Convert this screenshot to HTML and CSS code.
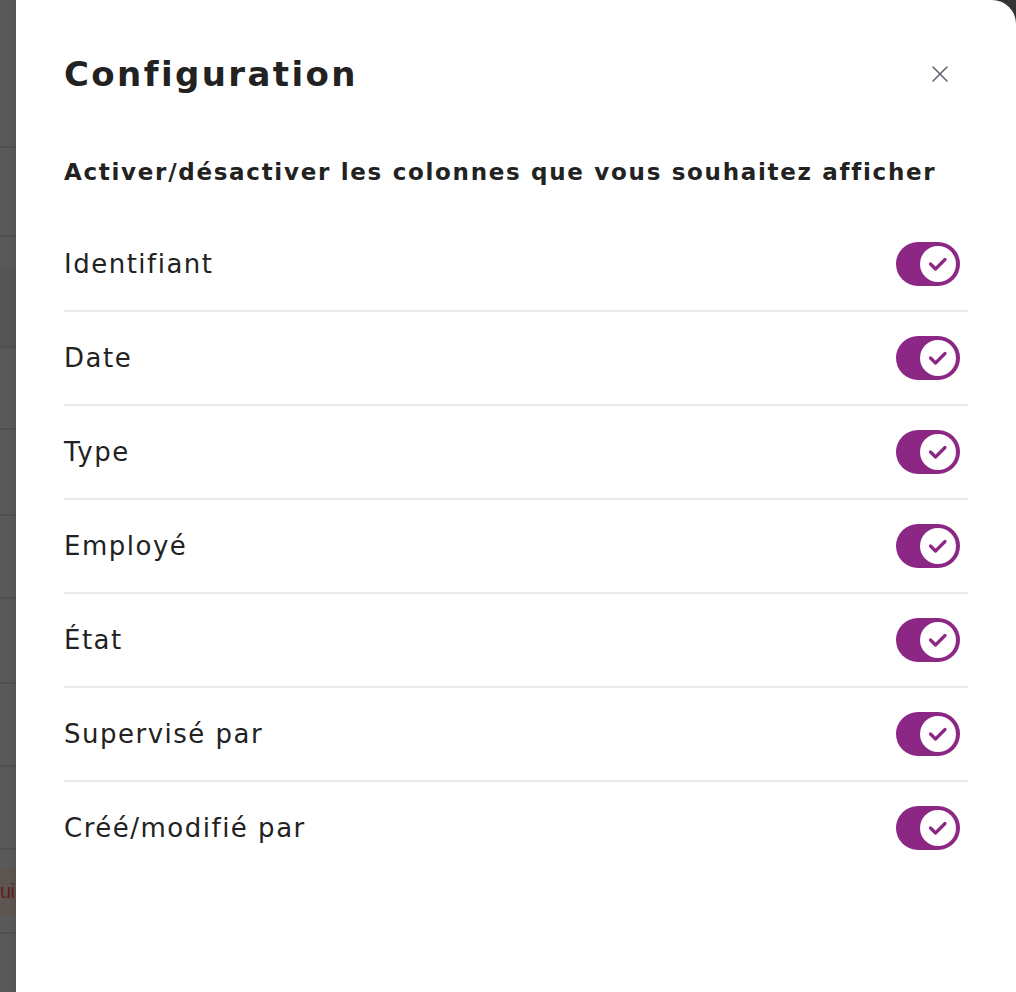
FILE: index.html
```html
<!DOCTYPE html>
<html lang="fr">
<head>
<meta charset="utf-8">
<title>Configuration</title>
<link rel="stylesheet" href="styles.css">
</head>
<body>
<div class="screen">
  <div class="backdrop">
    <div class="bg-row" style="height:148px"></div>
    <div class="bg-row" style="height:89px"></div>
    <div class="bg-row plain" style="height:31px"></div>
    <div class="bg-row band" style="height:80px"></div>
    <div class="bg-row" style="height:82px"></div>
    <div class="bg-row" style="height:86px"></div>
    <div class="bg-row" style="height:83px"></div>
    <div class="bg-row" style="height:85px"></div>
    <div class="bg-row" style="height:83px"></div>
    <div class="bg-row" style="height:83px"></div>
    <div class="bg-row plain" style="height:18px"></div>
    <div class="bg-row band-red plain" style="height:47px"><span class="bg-text">ui</span></div>
    <div class="bg-row" style="height:19px"></div>
  </div>
  <div class="modal">
    <div class="modal-header">
      <h1 class="modal-title">Configuration</h1>
      <button class="close" aria-label="Fermer">
        <svg width="16" height="16" viewBox="0 0 16 16"><path d="M1 1 L15 15 M15 1 L1 15" stroke="#5f5f6e" stroke-width="1.5" stroke-linecap="round" fill="none"/></svg>
      </button>
    </div>
    <h2 class="subtitle">Activer/désactiver les colonnes que vous souhaitez afficher</h2>
    <ul class="list">
      <li class="item"><span class="label">Identifiant</span><span class="toggle"><svg class="knob" width="36" height="36" viewBox="0 0 36 36"><circle cx="18" cy="18" r="18" fill="#fff"/><polyline points="10.5,18 15.5,23 25,13.5" fill="none" stroke="#8c2785" stroke-width="3.2" stroke-linecap="round" stroke-linejoin="round"/></svg></span></li>
      <li class="item"><span class="label">Date</span><span class="toggle"><svg class="knob" width="36" height="36" viewBox="0 0 36 36"><circle cx="18" cy="18" r="18" fill="#fff"/><polyline points="10.5,18 15.5,23 25,13.5" fill="none" stroke="#8c2785" stroke-width="3.2" stroke-linecap="round" stroke-linejoin="round"/></svg></span></li>
      <li class="item"><span class="label">Type</span><span class="toggle"><svg class="knob" width="36" height="36" viewBox="0 0 36 36"><circle cx="18" cy="18" r="18" fill="#fff"/><polyline points="10.5,18 15.5,23 25,13.5" fill="none" stroke="#8c2785" stroke-width="3.2" stroke-linecap="round" stroke-linejoin="round"/></svg></span></li>
      <li class="item"><span class="label">Employé</span><span class="toggle"><svg class="knob" width="36" height="36" viewBox="0 0 36 36"><circle cx="18" cy="18" r="18" fill="#fff"/><polyline points="10.5,18 15.5,23 25,13.5" fill="none" stroke="#8c2785" stroke-width="3.2" stroke-linecap="round" stroke-linejoin="round"/></svg></span></li>
      <li class="item"><span class="label">État</span><span class="toggle"><svg class="knob" width="36" height="36" viewBox="0 0 36 36"><circle cx="18" cy="18" r="18" fill="#fff"/><polyline points="10.5,18 15.5,23 25,13.5" fill="none" stroke="#8c2785" stroke-width="3.2" stroke-linecap="round" stroke-linejoin="round"/></svg></span></li>
      <li class="item"><span class="label">Supervisé par</span><span class="toggle"><svg class="knob" width="36" height="36" viewBox="0 0 36 36"><circle cx="18" cy="18" r="18" fill="#fff"/><polyline points="10.5,18 15.5,23 25,13.5" fill="none" stroke="#8c2785" stroke-width="3.2" stroke-linecap="round" stroke-linejoin="round"/></svg></span></li>
      <li class="item last"><span class="label">Créé/modifié par</span><span class="toggle"><svg class="knob" width="36" height="36" viewBox="0 0 36 36"><circle cx="18" cy="18" r="18" fill="#fff"/><polyline points="10.5,18 15.5,23 25,13.5" fill="none" stroke="#8c2785" stroke-width="3.2" stroke-linecap="round" stroke-linejoin="round"/></svg></span></li>
    </ul>
  </div>
</div>
</body>
</html>
```

FILE: styles.css
```css
* { box-sizing: border-box; }
html, body { margin: 0; padding: 0; }
body {
  background: #353535;
  font-family: "DejaVu Sans", "Noto Sans", sans-serif;
  color: #222222;
}
.screen {
  display: flex;
  width: 1016px;
  height: 992px;
  overflow: hidden;
}
.backdrop {
  width: 16px;
  flex: none;
  background: #595959;
  display: flex;
  flex-direction: column;
  overflow: hidden;
}
.bg-row {
  flex: none;
  border-bottom: 2px solid #4f4f54;
}
.bg-row.plain { border-bottom: none; }
.bg-row.band { background: #555555; }
.bg-row.band-red {
  background: #5d5551;
  display: flex;
  align-items: center;
}
.bg-text {
  font-family: "Liberation Sans", sans-serif;
  font-size: 20px;
  letter-spacing: -0.5px;
  color: #5e2219;
}
.modal {
  flex: 1;
  background: #ffffff;
  border-top-right-radius: 24px;
  padding: 0 48px;
  box-shadow: -2px 0 6px rgba(0,0,0,0.08);
}
.modal-header {
  margin-top: 42px;
  height: 64px;
  display: flex;
  align-items: center;
  justify-content: space-between;
}
.modal-title {
  margin: 0;
  font-size: 34px;
  letter-spacing: 2.4px;
  font-weight: 700;
  color: #222222;
}
.close {
  background: none;
  border: none;
  padding: 0;
  width: 16px;
  height: 16px;
  margin-right: 20px;
  display: flex;
}
.subtitle {
  margin: 50px 0 30px;
  height: 32px;
  line-height: 32px;
  font-size: 23px;
  letter-spacing: 1.7px;
  font-weight: 700;
  white-space: nowrap;
  color: #222222;
}
.list {
  list-style: none;
  margin: 0;
  padding: 0;
}
.item {
  height: 94px;
  display: flex;
  align-items: center;
  justify-content: space-between;
  border-bottom: 2px solid #e9e9ee;
}
.item.last { border-bottom-color: transparent; }
.label {
  font-size: 26px;
  letter-spacing: 1.5px;
  color: #222222;
}
.toggle {
  width: 64px;
  height: 44px;
  border-radius: 22px;
  background: #8c2785;
  margin-right: 8px;
  display: flex;
  align-items: center;
  justify-content: flex-end;
  padding-right: 4px;
}
.knob { display: block; }
```
